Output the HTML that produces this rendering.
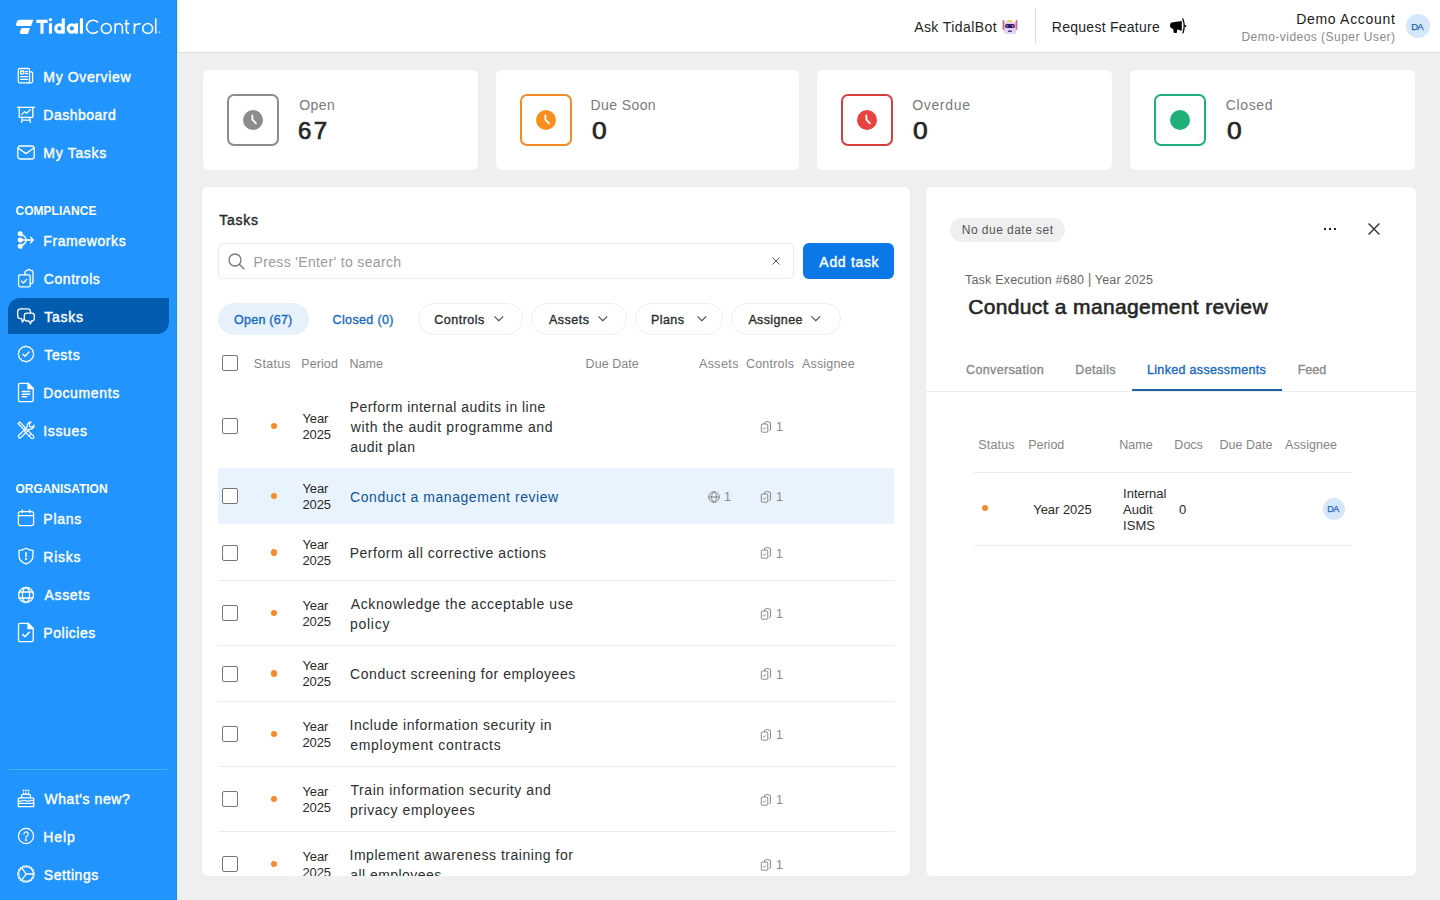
<!DOCTYPE html>
<html><head><meta charset="utf-8">
<style>
*{box-sizing:border-box;margin:0;padding:0}
html,body{width:1440px;height:900px;overflow:hidden;background:#efefef;font-family:"Liberation Sans",sans-serif;color:#2a2a2a}
.t{position:absolute;white-space:nowrap}
.a{position:absolute}
svg{position:absolute;overflow:visible}
</style></head><body>
<div class="a" style="left:0;top:0;width:177px;height:900px;background:#2194fe"></div>
<div class="a" style="left:8px;top:298px;width:161px;height:36px;background:#045cb1;border-radius:12px 0 12px 0"></div>
<div class="a" style="left:8px;top:769px;width:161px;height:1px;background:#44aefe"></div>
<svg style="left:0;top:0" width="177" height="50" viewBox="0 0 177 50">
<path d="M19.6 19.8 H33.3 L31.2 25.9 H17.6 Q15.5 25.9 16.1 23.9 L16.9 21.6 Q17.6 19.8 19.6 19.8 Z" fill="#fff"/>
<path d="M22.9 27.9 H29.9 L28 34 H21.4 Q19.5 34 20 32.1 L20.6 29.8 Q21.2 27.9 22.9 27.9 Z" fill="#fff"/>
<g stroke="#fff" stroke-width="3.1" fill="none">
<path d="M36.4 21.35 H47.6 M42 21.35 V33.7"/>
<path d="M50.45 23.3 V33.7"/>
<circle cx="59.35" cy="28.45" r="3.65"/><path d="M63.25 18.4 V33.7"/>
<circle cx="71.85" cy="28.45" r="3.65"/><path d="M76.5 23.3 V33.7"/>
<path d="M81.45 18.4 V33.7"/>
</g>
<circle cx="50.45" cy="19.7" r="1.65" fill="#fff"/>
<g stroke="#fff" stroke-width="1.6" fill="none">
<path d="M97.9 22.4 A6.55 6.55 0 1 0 97.9 31.2"/>
<circle cx="106.3" cy="28.45" r="4.95"/>
<path d="M115.2 23.2 V33.7 M115.2 27.3 A3.6 3.6 0 0 1 122.4 27.3 V33.7"/>
<path d="M126.4 19.8 V31 Q126.4 33.2 129.2 33.2 M124.4 23.7 H129.6"/>
<path d="M134.4 23.2 V33.7 M134.4 27.6 Q134.6 23.7 140.8 23.7"/>
<circle cx="147.7" cy="28.45" r="4.95"/>
<path d="M155.75 18.4 V33.7"/>
</g>
<circle cx="159.5" cy="32.3" r="1" fill="#fff" opacity="0.6"/>
</svg>
<div class="t" style="top:68.95px;font-size:14px;line-height:17px;color:#fff;-webkit-text-stroke:0.4px #fff;letter-spacing:0.625px;left:43.35px;">My Overview</div>
<div class="t" style="top:106.95px;font-size:14px;line-height:17px;color:#fff;-webkit-text-stroke:0.4px #fff;letter-spacing:0.488px;left:43.35px;">Dashboard</div>
<div class="t" style="top:144.95px;font-size:14px;line-height:17px;color:#fff;-webkit-text-stroke:0.4px #fff;letter-spacing:0.686px;left:43.35px;">My Tasks</div>
<div class="t" style="top:232.95px;font-size:14px;line-height:17px;color:#fff;-webkit-text-stroke:0.4px #fff;letter-spacing:0.589px;left:43.35px;">Frameworks</div>
<div class="t" style="top:270.95px;font-size:14px;line-height:17px;color:#fff;-webkit-text-stroke:0.4px #fff;letter-spacing:0.561px;left:43.79px;">Controls</div>
<div class="t" style="top:308.95px;font-size:14px;line-height:17px;color:#fff;-webkit-text-stroke:0.4px #fff;letter-spacing:0.744px;left:44.19px;">Tasks</div>
<div class="t" style="top:346.95px;font-size:14px;line-height:17px;color:#fff;-webkit-text-stroke:0.4px #fff;letter-spacing:0.699px;left:44.19px;">Tests</div>
<div class="t" style="top:384.95px;font-size:14px;line-height:17px;color:#fff;-webkit-text-stroke:0.4px #fff;letter-spacing:0.626px;left:43.35px;">Documents</div>
<div class="t" style="top:422.95px;font-size:14px;line-height:17px;color:#fff;-webkit-text-stroke:0.4px #fff;letter-spacing:0.649px;left:43.21px;">Issues</div>
<div class="t" style="top:510.95px;font-size:14px;line-height:17px;color:#fff;-webkit-text-stroke:0.4px #fff;letter-spacing:0.732px;left:43.35px;">Plans</div>
<div class="t" style="top:548.95px;font-size:14px;line-height:17px;color:#fff;-webkit-text-stroke:0.4px #fff;letter-spacing:0.721px;left:43.35px;">Risks</div>
<div class="t" style="top:586.95px;font-size:14px;line-height:17px;color:#fff;-webkit-text-stroke:0.4px #fff;letter-spacing:0.667px;left:44.47px;">Assets</div>
<div class="t" style="top:624.95px;font-size:14px;line-height:17px;color:#fff;-webkit-text-stroke:0.4px #fff;letter-spacing:0.528px;left:43.35px;">Policies</div>
<div class="t" style="top:790.95px;font-size:14px;line-height:17px;color:#fff;-webkit-text-stroke:0.4px #fff;letter-spacing:0.552px;left:44.44px;">What's new?</div>
<div class="t" style="top:828.95px;font-size:14px;line-height:17px;color:#fff;-webkit-text-stroke:0.4px #fff;letter-spacing:0.857px;left:43.35px;">Help</div>
<div class="t" style="top:866.95px;font-size:14px;line-height:17px;color:#fff;-webkit-text-stroke:0.4px #fff;letter-spacing:0.548px;left:43.86px;">Settings</div>
<div class="t" style="top:203.84px;font-size:12px;line-height:14px;color:#fff;font-weight:bold;letter-spacing:0.028px;left:15.51px;">COMPLIANCE</div>
<div class="t" style="top:481.84px;font-size:12px;line-height:14px;color:#fff;font-weight:bold;letter-spacing:-0.032px;left:15.51px;">ORGANISATION</div>
<svg style="left:17px;top:67px" width="18" height="18" viewBox="0 0 18 18" stroke="#fff" stroke-width="1.3" fill="none" stroke-linecap="round" stroke-linejoin="round"><rect x="1.3" y="1.5" width="11.2" height="14.3" rx="1.5"/><path d="M12.5 4.8h1.9a1.2 1.2 0 0 1 1.2 1.2v8.3a1.5 1.5 0 0 1-1.5 1.5H11"/><rect x="3.6" y="4" width="3.2" height="2.8" rx="0.4"/><path d="M8.5 4.6h2M8.5 6.6h2M3.6 9.6h6.9M3.6 12.4h6.9" stroke-width="1.4"/></svg>
<svg style="left:17px;top:105.5px" width="18" height="18" viewBox="0 0 18 18" stroke="#fff" stroke-width="1.3" fill="none" stroke-linecap="round" stroke-linejoin="round"><path d="M0.4 1.3H17.6"/><path d="M2.2 1.3V11.3H15.8V1.3"/><path d="M4.6 8.6l3-3 2 1.8 3.6-3.6"/><path d="M5.3 11.3L4.6 16.3M12.7 11.3L13.4 16.3M4.9 14.2H13.1"/></svg>
<svg style="left:17px;top:144px" width="18" height="18" viewBox="0 0 18 18" stroke="#fff" stroke-width="1.3" fill="none" stroke-linecap="round" stroke-linejoin="round"><rect x="0.8" y="2" width="16.4" height="13" rx="2.6"/><path d="M1.4 4.2L9 9.6L16.6 4.2"/></svg>
<svg style="left:17px;top:231px" width="18" height="18" viewBox="0 0 18 18" stroke="#fff" stroke-width="1.3" fill="none" stroke-linecap="round" stroke-linejoin="round"><circle cx="3.2" cy="2.7" r="1.9" fill="#fff"/><circle cx="3.2" cy="9" r="1.9" fill="#fff"/><circle cx="3.2" cy="15.3" r="1.9" fill="#fff"/><path d="M4.6 3.6 Q8.6 5.2 9.3 9 Q8.6 12.8 4.6 14.4M4.9 9H16.3M13.6 6.3l2.7 2.7-2.7 2.7" stroke-width="1.4"/></svg>
<svg style="left:17px;top:269px" width="18" height="19" viewBox="0 0 18 19" stroke="#fff" stroke-width="1.3" fill="none" stroke-linecap="round" stroke-linejoin="round"><path d="M8 5.8V3.2a1.5 1.5 0 0 1 1.5-1.5h0.6q0.5-1.2 1.9-1.2t1.9 1.2h0.6a1.5 1.5 0 0 1 1.5 1.5v9.8a1.5 1.5 0 0 1-1.5 1.5H13.2"/><rect x="1.6" y="5.8" width="11.6" height="12" rx="1.6"/><path d="M4.6 12.2l1.8 1.8 3.4-3.6"/></svg>
<svg style="left:17px;top:307.5px" width="18" height="17" viewBox="0 0 18 17" stroke="#fff" stroke-width="1.3" fill="none" stroke-linecap="round" stroke-linejoin="round"><path d="M3.6 0.9H10.6A2.9 2.9 0 0 1 13.5 3.8V7.8A2.9 2.9 0 0 1 10.6 10.7H7.5L5.4 14.2L4.6 10.7H3.6A2.9 2.9 0 0 1 0.7 7.8V3.8A2.9 2.9 0 0 1 3.6 0.9Z"/><path d="M9.8 5.2H14.8A2.5 2.5 0 0 1 17.3 7.7V10.5A2.5 2.5 0 0 1 14.8 13H14.2L13.6 15.8L11.8 13H9.8A2.5 2.5 0 0 1 7.3 10.5V7.7A2.5 2.5 0 0 1 9.8 5.2Z" fill="#045cb1"/></svg>
<svg style="left:17px;top:345px" width="18" height="18" viewBox="0 0 18 18" stroke="#fff" stroke-width="1.3" fill="none" stroke-linecap="round" stroke-linejoin="round"><path d="M16.80 9.00 L16.77 9.27 L16.68 9.54 L16.55 9.79 L16.40 10.04 L16.24 10.28 L16.10 10.51 L15.99 10.74 L15.93 10.99 L15.90 11.24 L15.91 11.51 L15.92 11.80 L15.94 12.09 L15.92 12.38 L15.86 12.65 L15.75 12.90 L15.59 13.12 L15.38 13.31 L15.14 13.46 L14.89 13.60 L14.63 13.72 L14.39 13.86 L14.18 14.01 L14.01 14.18 L13.86 14.39 L13.72 14.63 L13.60 14.89 L13.46 15.14 L13.31 15.38 L13.12 15.59 L12.90 15.75 L12.65 15.86 L12.38 15.92 L12.09 15.94 L11.80 15.92 L11.51 15.91 L11.24 15.90 L10.99 15.93 L10.74 15.99 L10.51 16.10 L10.28 16.24 L10.04 16.40 L9.79 16.55 L9.54 16.68 L9.27 16.77 L9.00 16.80 L8.73 16.77 L8.46 16.68 L8.21 16.55 L7.96 16.40 L7.72 16.24 L7.49 16.10 L7.26 15.99 L7.01 15.93 L6.76 15.90 L6.49 15.91 L6.20 15.92 L5.91 15.94 L5.62 15.92 L5.35 15.86 L5.10 15.75 L4.88 15.59 L4.69 15.38 L4.54 15.14 L4.40 14.89 L4.28 14.63 L4.14 14.39 L3.99 14.18 L3.82 14.01 L3.61 13.86 L3.37 13.72 L3.11 13.60 L2.86 13.46 L2.62 13.31 L2.41 13.12 L2.25 12.90 L2.14 12.65 L2.08 12.38 L2.06 12.09 L2.08 11.80 L2.09 11.51 L2.10 11.24 L2.07 10.99 L2.01 10.74 L1.90 10.51 L1.76 10.28 L1.60 10.04 L1.45 9.79 L1.32 9.54 L1.23 9.27 L1.20 9.00 L1.23 8.73 L1.32 8.46 L1.45 8.21 L1.60 7.96 L1.76 7.72 L1.90 7.49 L2.01 7.26 L2.07 7.01 L2.10 6.76 L2.09 6.49 L2.08 6.20 L2.06 5.91 L2.08 5.62 L2.14 5.35 L2.25 5.10 L2.41 4.88 L2.62 4.69 L2.86 4.54 L3.11 4.40 L3.37 4.28 L3.61 4.14 L3.82 3.99 L3.99 3.82 L4.14 3.61 L4.28 3.37 L4.40 3.11 L4.54 2.86 L4.69 2.62 L4.88 2.41 L5.10 2.25 L5.35 2.14 L5.62 2.08 L5.91 2.06 L6.20 2.08 L6.49 2.09 L6.76 2.10 L7.01 2.07 L7.26 2.01 L7.49 1.90 L7.72 1.76 L7.96 1.60 L8.21 1.45 L8.46 1.32 L8.73 1.23 L9.00 1.20 L9.27 1.23 L9.54 1.32 L9.79 1.45 L10.04 1.60 L10.28 1.76 L10.51 1.90 L10.74 2.01 L10.99 2.07 L11.24 2.10 L11.51 2.09 L11.80 2.08 L12.09 2.06 L12.38 2.08 L12.65 2.14 L12.90 2.25 L13.12 2.41 L13.31 2.62 L13.46 2.86 L13.60 3.11 L13.72 3.37 L13.86 3.61 L14.01 3.82 L14.18 3.99 L14.39 4.14 L14.63 4.28 L14.89 4.40 L15.14 4.54 L15.38 4.69 L15.59 4.88 L15.75 5.10 L15.86 5.35 L15.92 5.62 L15.94 5.91 L15.92 6.20 L15.91 6.49 L15.90 6.76 L15.93 7.01 L15.99 7.26 L16.10 7.49 L16.24 7.72 L16.40 7.96 L16.55 8.21 L16.68 8.46 L16.77 8.73Z"/><path d="M5.9 9.2l2.1 2.1 4-4.3"/></svg>
<svg style="left:17px;top:381.5px" width="18" height="21" viewBox="0 0 18 21" stroke="#fff" stroke-width="1.3" fill="none" stroke-linecap="round" stroke-linejoin="round"><path d="M3.1 1.3H11L16.2 6.5V18.1A1.6 1.6 0 0 1 14.6 19.7H3.1A1.6 1.6 0 0 1 1.5 18.1V2.9A1.6 1.6 0 0 1 3.1 1.3Z"/><path d="M11 1.3L16.2 6.5H11Z" fill="#fff"/><path d="M5.3 9.6H12.5M5.3 12.2H12.5M5.3 14.8H9.6" stroke-width="1.5"/></svg>
<svg style="left:17px;top:421px" width="18" height="18" viewBox="0 0 18 18" stroke="#fff" stroke-width="1.2" fill="none" stroke-linecap="round" stroke-linejoin="round"><path d="M1 2.6L2.6 1L8.6 7L7 8.6Z"/><path d="M9.6 8.1L16.6 15.1A1.6 1.6 0 0 1 14.4 17.3L7.4 10.3Z"/><path d="M11.9 15.2L13.6 13.5" /><path d="M14.2 1.2A3.6 3.6 0 0 0 10.3 5.8L1.6 14.5A1.6 1.6 0 0 0 3.8 16.7L12.5 8A3.6 3.6 0 0 0 17.1 4.1L15.1 6.1L12.7 5.6L12.2 3.2Z"/></svg>
<svg style="left:17px;top:509px" width="18" height="18" viewBox="0 0 18 18" stroke="#fff" stroke-width="1.3" fill="none" stroke-linecap="round" stroke-linejoin="round"><rect x="1.4" y="2.6" width="15.2" height="14" rx="2"/><path d="M1.4 6.7H16.6M5.3 0.8V3.6M12.7 0.8V3.6"/></svg>
<svg style="left:17px;top:547px" width="18" height="18" viewBox="0 0 18 18" stroke="#fff" stroke-width="1.3" fill="none" stroke-linecap="round" stroke-linejoin="round"><path d="M9 1.2Q12.5 3.4 16 3.4V9C16 13 12.5 15.6 9 16.8C5.5 15.6 2 13 2 9V3.4Q5.5 3.4 9 1.2Z"/><path d="M9 5.8V9.6" stroke-width="1.6"/><circle cx="9" cy="12.1" r="0.5" fill="#fff"/></svg>
<svg style="left:17px;top:585.5px" width="18" height="18" viewBox="0 0 18 18" stroke="#fff" stroke-width="1.3" fill="none" stroke-linecap="round" stroke-linejoin="round"><circle cx="9" cy="9" r="7.5"/><ellipse cx="9" cy="9" rx="3.6" ry="7.5"/><path d="M2.2 6H15.8M2.2 12H15.8"/></svg>
<svg style="left:17px;top:621.5px" width="18" height="21" viewBox="0 0 18 21" stroke="#fff" stroke-width="1.3" fill="none" stroke-linecap="round" stroke-linejoin="round"><path d="M3.1 1.3H11L16.2 6.5V18.1A1.6 1.6 0 0 1 14.6 19.7H3.1A1.6 1.6 0 0 1 1.5 18.1V2.9A1.6 1.6 0 0 1 3.1 1.3Z"/><path d="M11 1.3L16.2 6.5H11Z" fill="#fff"/><path d="M5.8 12.6L7.9 14.7L12.2 10.4" stroke-width="1.5"/></svg>
<svg style="left:17px;top:788.5px" width="18" height="19" viewBox="0 0 18 19" stroke="#fff" stroke-width="1.3" fill="none" stroke-linecap="round" stroke-linejoin="round"><path d="M6.5 1.4V1.6M9 1.4V1.6M11.5 1.4V1.6" stroke-width="1.9"/><path d="M6.5 4V5.2M9 4V5.2M11.5 4V5.2"/><path d="M4.6 8.8V6.8A1.5 1.5 0 0 1 6.1 5.3H11.9A1.5 1.5 0 0 1 13.4 6.8V8.8"/><path d="M1.3 10.3A1.5 1.5 0 0 1 2.8 8.8H15.2A1.5 1.5 0 0 1 16.7 10.3V17.7H1.3Z"/><path d="M1.3 14.3H16.7" stroke-width="1.2"/><path d="M1.5 11.8Q3.5 12.8 5.3 11.8T9 11.8T12.7 11.8T16.5 11.8" stroke-width="1.1"/></svg>
<svg style="left:17px;top:827px" width="18" height="18" viewBox="0 0 18 18" stroke="#fff" stroke-width="1.3" fill="none" stroke-linecap="round" stroke-linejoin="round"><circle cx="9" cy="9" r="7.6"/><path d="M6.9 7.1A2.2 2.2 0 1 1 9.9 9.1C9.3 9.4 9 9.8 9 10.5V11" stroke-width="1.2"/><circle cx="9" cy="13.1" r="0.45" fill="#fff"/></svg>
<svg style="left:17px;top:864.5px" width="18" height="18" viewBox="0 0 18 18" stroke="#fff" stroke-width="1.3" fill="none" stroke-linecap="round" stroke-linejoin="round"><path d="M16.10 9.00 L16.08 9.50 L17.25 9.87 L17.05 11.01 L15.82 10.96 L15.67 11.43 L15.49 11.89 L16.46 12.64 L15.88 13.64 L14.74 13.17 L14.44 13.56 L14.11 13.93 L14.77 14.97 L13.88 15.71 L12.97 14.89 L12.55 15.15 L12.11 15.38 L12.38 16.58 L11.29 16.98 L10.72 15.89 L10.23 15.99 L9.74 16.06 L9.58 17.28 L8.42 17.28 L8.26 16.06 L7.77 15.99 L7.28 15.89 L6.71 16.98 L5.62 16.58 L5.89 15.38 L5.45 15.15 L5.03 14.89 L4.12 15.71 L3.23 14.97 L3.89 13.93 L3.56 13.56 L3.26 13.17 L2.12 13.64 L1.54 12.64 L2.51 11.89 L2.33 11.43 L2.18 10.96 L0.95 11.01 L0.75 9.87 L1.92 9.50 L1.90 9.00 L1.92 8.50 L0.75 8.13 L0.95 6.99 L2.18 7.04 L2.33 6.57 L2.51 6.11 L1.54 5.36 L2.12 4.36 L3.26 4.83 L3.56 4.44 L3.89 4.07 L3.23 3.03 L4.12 2.29 L5.03 3.11 L5.45 2.85 L5.89 2.62 L5.62 1.42 L6.71 1.02 L7.28 2.11 L7.77 2.01 L8.26 1.94 L8.42 0.72 L9.58 0.72 L9.74 1.94 L10.23 2.01 L10.72 2.11 L11.29 1.02 L12.38 1.42 L12.11 2.62 L12.55 2.85 L12.97 3.11 L13.88 2.29 L14.77 3.03 L14.11 4.07 L14.44 4.44 L14.74 4.83 L15.88 4.36 L16.46 5.36 L15.49 6.11 L15.67 6.57 L15.82 7.04 L17.05 6.99 L17.25 8.13 L16.08 8.50Z" stroke-width="1.1"/><circle cx="9" cy="9" r="5.6" stroke-width="1.1" opacity="0"/><path d="M9 9H16.2M9 9L5.2 3.3M9 9L5.2 14.7" stroke-width="1.3"/></svg>
<div class="a" style="left:177px;top:0;width:1263px;height:52px;background:#fff"></div>
<div class="a" style="left:176px;top:0;width:1px;height:900px;background:#2a88d8"></div><div class="a" style="left:177px;top:0;width:1px;height:900px;background:#d4f2fb"></div>
<div class="a" style="left:177px;top:52px;width:1263px;height:1px;background:#dcdcdc"></div>
<div class="t" style="top:19.05px;font-size:14px;line-height:17px;color:#1f1f1f;letter-spacing:0.427px;left:914.17px;">Ask TidalBot</div>
<svg style="left:1000px;top:18px" width="20" height="18" viewBox="0 0 20 18">
<rect x="4" y="4" width="12" height="12" rx="2" fill="#e3d3f3"/>
<rect x="2.6" y="2" width="1.8" height="10" rx="0.9" fill="#d8648f"/>
<rect x="15.6" y="2" width="1.8" height="10" rx="0.9" fill="#d8648f"/>
<rect x="7" y="2.3" width="5" height="1.8" rx="0.9" fill="#f2c744"/>
<rect x="5" y="6" width="10" height="4" rx="2" fill="#3b1a63"/>
<rect x="6.3" y="6.9" width="1.6" height="2.2" rx="0.8" fill="#3aa6a0"/>
<rect x="12" y="6.9" width="1.6" height="2.2" rx="0.8" fill="#a49ad8"/>
<rect x="8" y="12.5" width="4" height="1.5" rx="0.75" fill="#3a2f8a"/>
</svg>
<div class="a" style="left:1035px;top:8px;width:1px;height:36px;background:#dedede"></div>
<div class="t" style="top:19.05px;font-size:14px;line-height:17px;color:#1f1f1f;letter-spacing:0.257px;left:1051.85px;">Request Feature</div>
<svg style="left:1168px;top:17px" width="20" height="18" viewBox="0 0 20 18">
<path d="M2 8.5 Q2 5.3 5 5.2 L13.8 4 V13.8 L9 12.4 V15 Q9 16 8 16 H6.7 Q5.7 16 5.6 15 L5.3 11.9 Q2 11.5 2 8.5Z" fill="#000"/>
<path d="M14.9 1.9 Q17.5 8.9 14.9 15.9" stroke="#000" stroke-width="1.3" fill="none" stroke-linecap="round"/>
<circle cx="17.4" cy="9" r="0.9" fill="#000"/>
</svg>
<div class="t" style="top:11.05px;font-size:14px;line-height:17px;color:#1a1a1a;letter-spacing:0.686px;right:44.50px;text-align:right;">Demo Account</div>
<div class="t" style="top:29.74px;font-size:12px;line-height:14px;color:#8a8a8a;letter-spacing:0.474px;right:44.50px;text-align:right;">Demo-videos (Super User)</div>
<div class="a" style="left:1406px;top:14px;width:24px;height:24px;border-radius:12px;background:#d5e7fb"></div>
<div class="t" style="top:21.11px;font-size:9.5px;line-height:11px;color:#1f62ad;-webkit-text-stroke:0.25px #1f62ad;letter-spacing:-0.900px;left:1411.32px;">DA</div>
<div class="a" style="left:203px;top:70px;width:275px;height:100px;background:#fff;border-radius:6px"></div>
<div class="a" style="left:227px;top:94px;width:52px;height:52px;border:2px solid #8c8c8c;border-radius:7px"></div>
<svg style="left:243px;top:110px" width="20" height="20" viewBox="0 0 20 20"><circle cx="10" cy="10" r="10" fill="#8c8c8c"/><path d="M9.4 5.4V9.6L12.9 13.3" stroke="#fff" stroke-width="1.85" fill="none" stroke-linecap="round" stroke-linejoin="round"/></svg>
<div class="t" style="top:96.65px;font-size:14px;line-height:17px;color:#7a7a7a;letter-spacing:0.450px;left:299.14px;">Open</div>
<div class="t" style="top:115.88px;font-size:24px;line-height:29px;color:#262626;-webkit-text-stroke:0.69px #262626;letter-spacing:2.200px;left:298.08px;">67</div>
<div class="a" style="left:496px;top:70px;width:303px;height:100px;background:#fff;border-radius:6px"></div>
<div class="a" style="left:520px;top:94px;width:52px;height:52px;border:2px solid #f08b26;border-radius:7px"></div>
<svg style="left:536px;top:110px" width="20" height="20" viewBox="0 0 20 20"><circle cx="10" cy="10" r="10" fill="#f7901f"/><path d="M9.4 5.4V9.6L12.9 13.3" stroke="#fff" stroke-width="1.85" fill="none" stroke-linecap="round" stroke-linejoin="round"/></svg>
<div class="t" style="top:96.65px;font-size:14px;line-height:17px;color:#7a7a7a;letter-spacing:0.421px;left:590.45px;">Due Soon</div>
<div class="t" style="top:115.88px;font-size:24px;line-height:29px;color:#262626;-webkit-text-stroke:0.69px #262626;left:591.66px;transform:scaleX(1.1);transform-origin:0 0;">0</div>
<div class="a" style="left:817px;top:70px;width:295px;height:100px;background:#fff;border-radius:6px"></div>
<div class="a" style="left:841px;top:94px;width:52px;height:52px;border:2px solid #d4403c;border-radius:7px"></div>
<svg style="left:857px;top:110px" width="20" height="20" viewBox="0 0 20 20"><circle cx="10" cy="10" r="10" fill="#e8433f"/><path d="M9.4 5.4V9.6L12.9 13.3" stroke="#fff" stroke-width="1.85" fill="none" stroke-linecap="round" stroke-linejoin="round"/></svg>
<div class="t" style="top:96.65px;font-size:14px;line-height:17px;color:#7a7a7a;letter-spacing:0.683px;left:912.14px;">Overdue</div>
<div class="t" style="top:115.88px;font-size:24px;line-height:29px;color:#262626;-webkit-text-stroke:0.69px #262626;left:912.86px;transform:scaleX(1.1);transform-origin:0 0;">0</div>
<div class="a" style="left:1130px;top:70px;width:285px;height:100px;background:#fff;border-radius:6px"></div>
<div class="a" style="left:1154px;top:94px;width:52px;height:52px;border:2px solid #1fb07a;border-radius:7px"></div>
<div class="a" style="left:1170px;top:110px;width:20px;height:20px;border-radius:10px;background:#1fb07a"></div>
<div class="t" style="top:96.65px;font-size:14px;line-height:17px;color:#7a7a7a;letter-spacing:0.640px;left:1225.79px;">Closed</div>
<div class="t" style="top:115.88px;font-size:24px;line-height:29px;color:#262626;-webkit-text-stroke:0.69px #262626;left:1226.56px;transform:scaleX(1.1);transform-origin:0 0;">0</div>
<div class="a" style="left:202px;top:187px;width:708px;height:689px;background:#fff;border-radius:6px"></div>
<div class="t" style="top:212.35px;font-size:14px;line-height:17px;color:#2a2a2a;-webkit-text-stroke:0.4px #2a2a2a;letter-spacing:0.775px;left:219.19px;">Tasks</div>
<div class="a" style="left:218px;top:243px;width:576px;height:36px;border:1px solid #ebebeb;border-radius:5px"></div>
<svg style="left:228px;top:253px" width="17" height="17" viewBox="0 0 17 17"><circle cx="7" cy="7" r="6" stroke="#777" stroke-width="1.3" fill="none"/><path d="M11.3 11.3l4.5 4.5" stroke="#777" stroke-width="1.3" stroke-linecap="round"/></svg>
<div class="t" style="top:253.65px;font-size:14px;line-height:17px;color:#9a9a9a;letter-spacing:0.343px;left:253.55px;">Press 'Enter' to search</div>
<svg style="left:772px;top:257px" width="8" height="8" viewBox="0 0 8 8"><path d="M0.5 0.5l7 7M7.5 0.5l-7 7" stroke="#4a4a4a" stroke-width="0.95"/></svg>
<div class="a" style="left:803px;top:243px;width:91px;height:36px;background:#0a78e6;border-radius:6px"></div>
<div class="t" style="top:254.05px;font-size:14px;line-height:17px;color:#fff;-webkit-text-stroke:0.4px #fff;letter-spacing:0.679px;left:819.37px;">Add task</div>
<div class="a" style="left:218px;top:303px;width:91px;height:32px;background:#e6f1fc;border-radius:16px"></div>
<div class="t" style="top:313.37px;font-size:12.5px;line-height:15px;color:#1769c0;-webkit-text-stroke:0.36px #1769c0;letter-spacing:0.250px;left:234.01px;">Open (67)</div>
<div class="t" style="top:313.37px;font-size:12.5px;line-height:15px;color:#1769c0;-webkit-text-stroke:0.36px #1769c0;letter-spacing:0.361px;left:332.57px;">Closed (0)</div>
<div class="a" style="left:418px;top:303px;width:105px;height:32px;border:1px solid #efefef;border-radius:16px"></div>
<div class="t" style="top:313.37px;font-size:12.5px;line-height:15px;color:#2e2e2e;-webkit-text-stroke:0.36px #2e2e2e;letter-spacing:0.479px;left:434.37px;">Controls</div>
<svg style="left:494.0px;top:315.8px" width="10" height="6" viewBox="0 0 10 6"><path d="M0.4 0.4L4.8 4.7L9.2 0.4" stroke="#444" stroke-width="1.05" fill="none"/></svg>
<div class="a" style="left:531px;top:303px;width:96px;height:32px;border:1px solid #efefef;border-radius:16px"></div>
<div class="t" style="top:313.37px;font-size:12.5px;line-height:15px;color:#2e2e2e;-webkit-text-stroke:0.36px #2e2e2e;letter-spacing:0.480px;left:548.98px;">Assets</div>
<svg style="left:597.5px;top:315.8px" width="10" height="6" viewBox="0 0 10 6"><path d="M0.4 0.4L4.8 4.7L9.2 0.4" stroke="#444" stroke-width="1.05" fill="none"/></svg>
<div class="a" style="left:635px;top:303px;width:88px;height:32px;border:1px solid #efefef;border-radius:16px"></div>
<div class="t" style="top:313.37px;font-size:12.5px;line-height:15px;color:#2e2e2e;-webkit-text-stroke:0.36px #2e2e2e;letter-spacing:0.412px;left:650.97px;">Plans</div>
<svg style="left:696.5px;top:315.8px" width="10" height="6" viewBox="0 0 10 6"><path d="M0.4 0.4L4.8 4.7L9.2 0.4" stroke="#444" stroke-width="1.05" fill="none"/></svg>
<div class="a" style="left:731px;top:303px;width:110px;height:32px;border:1px solid #efefef;border-radius:16px"></div>
<div class="t" style="top:313.37px;font-size:12.5px;line-height:15px;color:#2e2e2e;-webkit-text-stroke:0.36px #2e2e2e;letter-spacing:0.386px;left:748.38px;">Assignee</div>
<svg style="left:811.0px;top:315.8px" width="10" height="6" viewBox="0 0 10 6"><path d="M0.4 0.4L4.8 4.7L9.2 0.4" stroke="#444" stroke-width="1.05" fill="none"/></svg>
<div class="a" style="left:222px;top:355px;width:16px;height:16px;border:1px solid #767676;border-radius:2px;background:#fff"></div>
<div class="t" style="top:357.17px;font-size:12.5px;line-height:15px;color:#858585;letter-spacing:0.270px;left:253.83px;">Status</div>
<div class="t" style="top:357.17px;font-size:12.5px;line-height:15px;color:#858585;letter-spacing:0.070px;left:301.37px;">Period</div>
<div class="t" style="top:357.17px;font-size:12.5px;line-height:15px;color:#858585;left:349.57px;">Name</div>
<div class="t" style="top:357.17px;font-size:12.5px;line-height:15px;color:#858585;letter-spacing:0.043px;left:585.57px;">Due Date</div>
<div class="t" style="top:357.17px;font-size:12.5px;line-height:15px;color:#858585;letter-spacing:0.380px;left:698.98px;">Assets</div>
<div class="t" style="top:357.17px;font-size:12.5px;line-height:15px;color:#858585;letter-spacing:0.207px;left:745.97px;">Controls</div>
<div class="t" style="top:357.17px;font-size:12.5px;line-height:15px;color:#858585;letter-spacing:0.179px;left:801.98px;">Assignee</div>
<div class="a" style="left:202px;top:383px;width:708px;height:493px;overflow:hidden">
<div class="a" style="left:20px;top:35.0px;width:16px;height:16px;border:1px solid #767676;border-radius:2px;background:#fff"></div>
<div class="a" style="left:68.6px;top:39.6px;width:6.8px;height:6.8px;border-radius:3.4px;background:#f58a2a"></div>
<div class="t" style="top:27.99px;font-size:13px;line-height:16px;color:#2a2a2a;letter-spacing:-0.150px;left:100.51px;">Year<br>2025</div>
<div class="t" style="top:13.65px;font-size:14px;line-height:20px;color:#2e2e2e;letter-spacing:0.477px;left:147.65px;">Perform internal audits in line</div>
<div class="t" style="top:33.65px;font-size:14px;line-height:20px;color:#2e2e2e;letter-spacing:0.609px;left:148.82px;">with the audit programme and</div>
<div class="t" style="top:53.65px;font-size:14px;line-height:20px;color:#2e2e2e;left:148.21px;letter-spacing:0.45px;">audit plan</div>
<svg style="left:558px;top:37.8px" width="12" height="12" viewBox="0 0 12 12" stroke="#7a7a7a" stroke-width="0.9" fill="none"><path d="M4.5 3V2a1 1 0 0 1 1-1h0.5a1 0.6 0 0 1 2 0h1.5a1 1 0 0 1 1 1v6.5a1 1 0 0 1-1 1H9"/><rect x="1.3" y="3" width="6.5" height="8.2" rx="1"/><path d="M3 7.3l1 1 1.8-1.8"/></svg>
<div class="t" style="top:37.07px;font-size:12.5px;line-height:15px;color:#8a8a8a;left:573.95px;">1</div>
<div class="a" style="left:16px;top:85px;width:676px;height:56px;background:#e9f3fd"></div>
<div class="a" style="left:20px;top:105.0px;width:16px;height:16px;border:1px solid #767676;border-radius:2px;background:#fff"></div>
<div class="a" style="left:68.6px;top:109.6px;width:6.8px;height:6.8px;border-radius:3.4px;background:#f58a2a"></div>
<div class="t" style="top:97.99px;font-size:13px;line-height:16px;color:#2a2a2a;letter-spacing:-0.150px;left:100.51px;">Year<br>2025</div>
<div class="t" style="top:103.65px;font-size:14px;line-height:20px;color:#0e5499;letter-spacing:0.550px;left:148.09px;">Conduct a management review</div>
<svg style="left:558px;top:107.8px" width="12" height="12" viewBox="0 0 12 12" stroke="#7a7a7a" stroke-width="0.9" fill="none"><path d="M4.5 3V2a1 1 0 0 1 1-1h0.5a1 0.6 0 0 1 2 0h1.5a1 1 0 0 1 1 1v6.5a1 1 0 0 1-1 1H9"/><rect x="1.3" y="3" width="6.5" height="8.2" rx="1"/><path d="M3 7.3l1 1 1.8-1.8"/></svg>
<div class="t" style="top:107.07px;font-size:12.5px;line-height:15px;color:#8a8a8a;left:573.95px;">1</div>
<svg style="left:506px;top:107.8px" width="12" height="12" viewBox="0 0 12 12" stroke="#7a7a7a" stroke-width="0.9" fill="none"><circle cx="6" cy="6" r="5.3"/><path d="M0.7 6h10.6M6 0.7c-1.8 1.4-2.5 3.2-2.5 5.3s0.7 3.9 2.5 5.3M6 0.7c1.8 1.4 2.5 3.2 2.5 5.3s-0.7 3.9-2.5 5.3"/></svg>
<div class="t" style="top:107.07px;font-size:12.5px;line-height:15px;color:#8a8a8a;left:522.05px;">1</div>
<div class="a" style="left:16px;top:197px;width:677px;height:1px;background:#ededed"></div>
<div class="a" style="left:20px;top:161.5px;width:16px;height:16px;border:1px solid #767676;border-radius:2px;background:#fff"></div>
<div class="a" style="left:68.6px;top:166.1px;width:6.8px;height:6.8px;border-radius:3.4px;background:#f58a2a"></div>
<div class="t" style="top:154.49px;font-size:13px;line-height:16px;color:#2a2a2a;letter-spacing:-0.150px;left:100.51px;">Year<br>2025</div>
<div class="t" style="top:160.15px;font-size:14px;line-height:20px;color:#2e2e2e;letter-spacing:0.547px;left:147.65px;">Perform all corrective actions</div>
<svg style="left:558px;top:164.3px" width="12" height="12" viewBox="0 0 12 12" stroke="#7a7a7a" stroke-width="0.9" fill="none"><path d="M4.5 3V2a1 1 0 0 1 1-1h0.5a1 0.6 0 0 1 2 0h1.5a1 1 0 0 1 1 1v6.5a1 1 0 0 1-1 1H9"/><rect x="1.3" y="3" width="6.5" height="8.2" rx="1"/><path d="M3 7.3l1 1 1.8-1.8"/></svg>
<div class="t" style="top:163.57px;font-size:12.5px;line-height:15px;color:#8a8a8a;left:573.95px;">1</div>
<div class="a" style="left:16px;top:262px;width:677px;height:1px;background:#ededed"></div>
<div class="a" style="left:20px;top:222.0px;width:16px;height:16px;border:1px solid #767676;border-radius:2px;background:#fff"></div>
<div class="a" style="left:68.6px;top:226.6px;width:6.8px;height:6.8px;border-radius:3.4px;background:#f58a2a"></div>
<div class="t" style="top:214.99px;font-size:13px;line-height:16px;color:#2a2a2a;letter-spacing:-0.150px;left:100.51px;">Year<br>2025</div>
<div class="t" style="top:210.65px;font-size:14px;line-height:20px;color:#2e2e2e;letter-spacing:0.610px;left:148.77px;">Acknowledge the acceptable use</div>
<div class="t" style="top:230.65px;font-size:14px;line-height:20px;color:#2e2e2e;letter-spacing:0.760px;left:147.90px;">policy</div>
<svg style="left:558px;top:224.8px" width="12" height="12" viewBox="0 0 12 12" stroke="#7a7a7a" stroke-width="0.9" fill="none"><path d="M4.5 3V2a1 1 0 0 1 1-1h0.5a1 0.6 0 0 1 2 0h1.5a1 1 0 0 1 1 1v6.5a1 1 0 0 1-1 1H9"/><rect x="1.3" y="3" width="6.5" height="8.2" rx="1"/><path d="M3 7.3l1 1 1.8-1.8"/></svg>
<div class="t" style="top:224.07px;font-size:12.5px;line-height:15px;color:#8a8a8a;left:573.95px;">1</div>
<div class="a" style="left:16px;top:318px;width:677px;height:1px;background:#ededed"></div>
<div class="a" style="left:20px;top:282.5px;width:16px;height:16px;border:1px solid #767676;border-radius:2px;background:#fff"></div>
<div class="a" style="left:68.6px;top:287.1px;width:6.8px;height:6.8px;border-radius:3.4px;background:#f58a2a"></div>
<div class="t" style="top:275.49px;font-size:13px;line-height:16px;color:#2a2a2a;letter-spacing:-0.150px;left:100.51px;">Year<br>2025</div>
<div class="t" style="top:281.15px;font-size:14px;line-height:20px;color:#2e2e2e;letter-spacing:0.555px;left:148.09px;">Conduct screening for employees</div>
<svg style="left:558px;top:285.3px" width="12" height="12" viewBox="0 0 12 12" stroke="#7a7a7a" stroke-width="0.9" fill="none"><path d="M4.5 3V2a1 1 0 0 1 1-1h0.5a1 0.6 0 0 1 2 0h1.5a1 1 0 0 1 1 1v6.5a1 1 0 0 1-1 1H9"/><rect x="1.3" y="3" width="6.5" height="8.2" rx="1"/><path d="M3 7.3l1 1 1.8-1.8"/></svg>
<div class="t" style="top:284.57px;font-size:12.5px;line-height:15px;color:#8a8a8a;left:573.95px;">1</div>
<div class="a" style="left:16px;top:383px;width:677px;height:1px;background:#ededed"></div>
<div class="a" style="left:20px;top:343.0px;width:16px;height:16px;border:1px solid #767676;border-radius:2px;background:#fff"></div>
<div class="a" style="left:68.6px;top:347.6px;width:6.8px;height:6.8px;border-radius:3.4px;background:#f58a2a"></div>
<div class="t" style="top:335.99px;font-size:13px;line-height:16px;color:#2a2a2a;letter-spacing:-0.150px;left:100.51px;">Year<br>2025</div>
<div class="t" style="top:331.65px;font-size:14px;line-height:20px;color:#2e2e2e;letter-spacing:0.563px;left:147.51px;">Include information security in</div>
<div class="t" style="top:351.65px;font-size:14px;line-height:20px;color:#2e2e2e;letter-spacing:0.713px;left:148.21px;">employment contracts</div>
<svg style="left:558px;top:345.8px" width="12" height="12" viewBox="0 0 12 12" stroke="#7a7a7a" stroke-width="0.9" fill="none"><path d="M4.5 3V2a1 1 0 0 1 1-1h0.5a1 0.6 0 0 1 2 0h1.5a1 1 0 0 1 1 1v6.5a1 1 0 0 1-1 1H9"/><rect x="1.3" y="3" width="6.5" height="8.2" rx="1"/><path d="M3 7.3l1 1 1.8-1.8"/></svg>
<div class="t" style="top:345.07px;font-size:12.5px;line-height:15px;color:#8a8a8a;left:573.95px;">1</div>
<div class="a" style="left:16px;top:448px;width:677px;height:1px;background:#ededed"></div>
<div class="a" style="left:20px;top:408.0px;width:16px;height:16px;border:1px solid #767676;border-radius:2px;background:#fff"></div>
<div class="a" style="left:68.6px;top:412.6px;width:6.8px;height:6.8px;border-radius:3.4px;background:#f58a2a"></div>
<div class="t" style="top:400.99px;font-size:13px;line-height:16px;color:#2a2a2a;letter-spacing:-0.150px;left:100.51px;">Year<br>2025</div>
<div class="t" style="top:396.65px;font-size:14px;line-height:20px;color:#2e2e2e;letter-spacing:0.566px;left:148.49px;">Train information security and</div>
<div class="t" style="top:416.65px;font-size:14px;line-height:20px;color:#2e2e2e;letter-spacing:0.559px;left:147.90px;">privacy employees</div>
<svg style="left:558px;top:410.8px" width="12" height="12" viewBox="0 0 12 12" stroke="#7a7a7a" stroke-width="0.9" fill="none"><path d="M4.5 3V2a1 1 0 0 1 1-1h0.5a1 0.6 0 0 1 2 0h1.5a1 1 0 0 1 1 1v6.5a1 1 0 0 1-1 1H9"/><rect x="1.3" y="3" width="6.5" height="8.2" rx="1"/><path d="M3 7.3l1 1 1.8-1.8"/></svg>
<div class="t" style="top:410.07px;font-size:12.5px;line-height:15px;color:#8a8a8a;left:573.95px;">1</div>
<div class="a" style="left:16px;top:513px;width:677px;height:1px;background:#ededed"></div>
<div class="a" style="left:20px;top:473.0px;width:16px;height:16px;border:1px solid #767676;border-radius:2px;background:#fff"></div>
<div class="a" style="left:68.6px;top:477.6px;width:6.8px;height:6.8px;border-radius:3.4px;background:#f58a2a"></div>
<div class="t" style="top:465.99px;font-size:13px;line-height:16px;color:#2a2a2a;letter-spacing:-0.150px;left:100.51px;">Year<br>2025</div>
<div class="t" style="top:461.65px;font-size:14px;line-height:20px;color:#2e2e2e;letter-spacing:0.529px;left:147.51px;">Implement awareness training for</div>
<div class="t" style="top:481.65px;font-size:14px;line-height:20px;color:#2e2e2e;left:148.21px;letter-spacing:0.45px;">all employees</div>
<svg style="left:558px;top:475.8px" width="12" height="12" viewBox="0 0 12 12" stroke="#7a7a7a" stroke-width="0.9" fill="none"><path d="M4.5 3V2a1 1 0 0 1 1-1h0.5a1 0.6 0 0 1 2 0h1.5a1 1 0 0 1 1 1v6.5a1 1 0 0 1-1 1H9"/><rect x="1.3" y="3" width="6.5" height="8.2" rx="1"/><path d="M3 7.3l1 1 1.8-1.8"/></svg>
<div class="t" style="top:475.07px;font-size:12.5px;line-height:15px;color:#8a8a8a;left:573.95px;">1</div>
</div>
<div class="a" style="left:926px;top:187px;width:490px;height:689px;background:#fff;border-radius:6px"></div>
<div class="a" style="left:950px;top:218px;width:115px;height:24px;background:#efefef;border-radius:12px"></div>
<div class="t" style="top:222.74px;font-size:12px;line-height:14px;color:#555;letter-spacing:0.461px;left:961.82px;">No due date set</div>
<div class="a" style="left:1324px;top:228px;width:2.2px;height:2.2px;background:#222"></div>
<div class="a" style="left:1329px;top:228px;width:2.2px;height:2.2px;background:#222"></div>
<div class="a" style="left:1334px;top:228px;width:2.2px;height:2.2px;background:#222"></div>
<svg style="left:1368px;top:223px" width="12" height="12" viewBox="0 0 12 12"><path d="M0.6 0.6l10.8 10.8M11.4 0.6L0.6 11.4" stroke="#333" stroke-width="1.4"/></svg>
<div class="t" style="top:272.97px;font-size:12.5px;line-height:15px;color:#666;letter-spacing:0.202px;left:965.02px;">Task Execution #680 <span style="display:inline-block;transform:scaleY(1.22);transform-origin:50% 80%">|</span> Year 2025</div>
<div class="t" style="top:293.52px;font-size:21px;line-height:25px;color:#262626;-webkit-text-stroke:0.6px #262626;letter-spacing:0.337px;left:968.13px;">Conduct a management review</div>
<div class="t" style="top:362.92px;font-size:12.5px;line-height:15px;color:#8a8a8a;-webkit-text-stroke:0.36px #8a8a8a;letter-spacing:0.359px;left:966.07px;">Conversation</div>
<div class="t" style="top:362.92px;font-size:12.5px;line-height:15px;color:#8a8a8a;-webkit-text-stroke:0.36px #8a8a8a;letter-spacing:0.317px;left:1075.37px;">Details</div>
<div class="t" style="top:362.92px;font-size:12.5px;line-height:15px;color:#1769c0;-webkit-text-stroke:0.36px #1769c0;letter-spacing:0.326px;left:1146.97px;">Linked assessments</div>
<div class="t" style="top:362.92px;font-size:12.5px;line-height:15px;color:#8a8a8a;-webkit-text-stroke:0.36px #8a8a8a;letter-spacing:-0.033px;left:1297.77px;">Feed</div>
<div class="a" style="left:926px;top:391px;width:490px;height:1px;background:#ececec"></div>
<div class="a" style="left:1132px;top:389px;width:150px;height:2px;background:#1b62ab"></div>
<div class="t" style="top:437.97px;font-size:12.5px;line-height:15px;color:#858585;letter-spacing:0.170px;left:978.33px;">Status</div>
<div class="t" style="top:437.97px;font-size:12.5px;line-height:15px;color:#858585;left:1028.17px;">Period</div>
<div class="t" style="top:437.97px;font-size:12.5px;line-height:15px;color:#858585;left:1119.27px;">Name</div>
<div class="t" style="top:437.97px;font-size:12.5px;line-height:15px;color:#858585;left:1174.37px;">Docs</div>
<div class="t" style="top:437.97px;font-size:12.5px;line-height:15px;color:#858585;letter-spacing:0.014px;left:1219.57px;">Due Date</div>
<div class="t" style="top:437.97px;font-size:12.5px;line-height:15px;color:#858585;letter-spacing:0.071px;left:1285.08px;">Assignee</div>
<div class="a" style="left:974px;top:472px;width:378px;height:1px;background:#ececec"></div>
<div class="a" style="left:982px;top:505px;width:6px;height:6px;border-radius:3px;background:#f58a2a"></div>
<div class="t" style="top:502.19px;font-size:13px;line-height:16px;color:#2a2a2a;letter-spacing:-0.037px;left:1033.21px;">Year 2025</div>
<div class="t" style="top:486.09px;font-size:13px;line-height:16px;color:#2a2a2a;left:1123.10px;">Internal<br>Audit<br>ISMS</div>
<div class="t" style="top:501.89px;font-size:13px;line-height:16px;color:#2a2a2a;left:1178.89px;">0</div>
<div class="a" style="left:1323px;top:498px;width:22px;height:22px;border-radius:11px;background:#d5e7fb"></div>
<div class="t" style="top:504.28px;font-size:9px;line-height:11px;color:#1f62ad;-webkit-text-stroke:0.25px #1f62ad;letter-spacing:-0.400px;left:1327.16px;">DA</div>
<div class="a" style="left:974px;top:545px;width:378px;height:1px;background:#ececec"></div>
</body></html>
